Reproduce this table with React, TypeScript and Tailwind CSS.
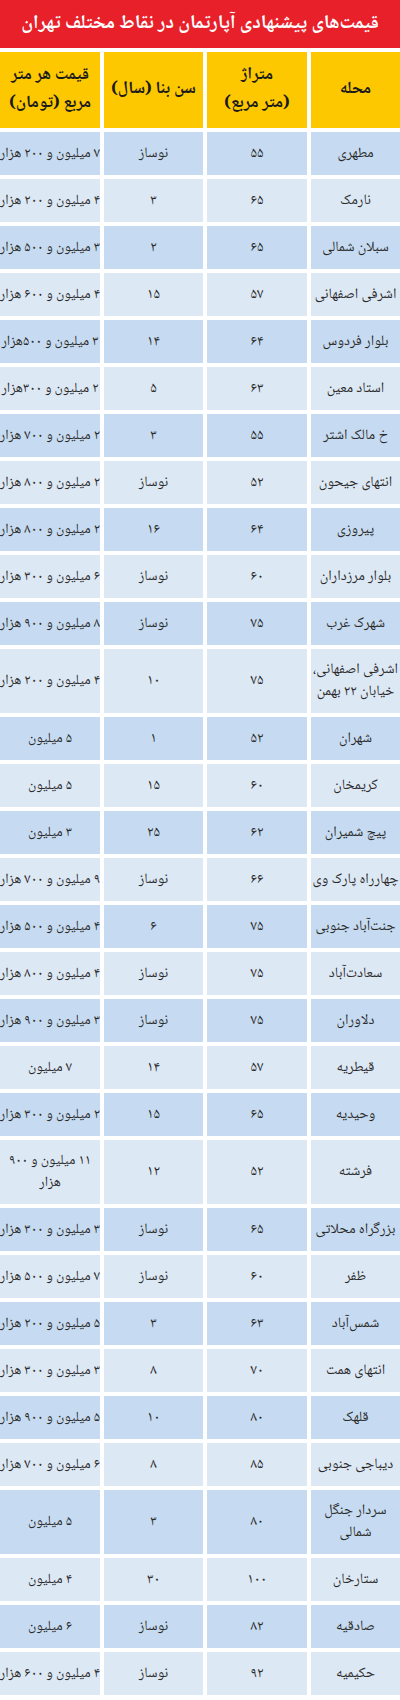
const rows: [string, string, string, string][] = [
  ["مطهری", "۵۵", "نوساز", "۷ میلیون و ۲۰۰ هزار"],
  ["نارمک", "۶۵", "۳", "۴ میلیون و ۲۰۰ هزار"],
  ["سبلان شمالی", "۶۵", "۲", "۳ میلیون و ۵۰۰ هزار"],
  ["اشرفی اصفهانی", "۵۷", "۱۵", "۴ میلیون و ۶۰۰ هزار"],
  ["بلوار فردوس", "۶۴", "۱۴", "۳ میلیون و ۵۰۰هزار"],
  ["استاد معین", "۶۳", "۵", "۲ میلیون و ۳۰۰هزار"],
  ["خ مالک اشتر", "۵۵", "۳", "۲ میلیون و ۷۰۰ هزار"],
  ["انتهای جیحون", "۵۲", "نوساز", "۲ میلیون و ۸۰۰ هزار"],
  ["پیروزی", "۶۴", "۱۶", "۲ میلیون و ۸۰۰ هزار"],
  ["بلوار مرزداران", "۶۰", "نوساز", "۶ میلیون و ۳۰۰ هزار"],
  ["شهرک غرب", "۷۵", "نوساز", "۸ میلیون و ۹۰۰ هزار"],
  ["اشرفی اصفهانی،\nخیابان ۲۲ بهمن", "۷۵", "۱۰", "۴ میلیون و ۲۰۰ هزار"],
  ["شهران", "۵۲", "۱", "۵ میلیون"],
  ["کریمخان", "۶۰", "۱۵", "۵ میلیون"],
  ["پیچ شمیران", "۶۲", "۲۵", "۳ میلیون"],
  ["چهارراه پارک وی", "۶۶", "نوساز", "۹ میلیون و ۷۰۰ هزار"],
  ["جنت‌آباد جنوبی", "۷۵", "۶", "۴ میلیون و ۵۰۰ هزار"],
  ["سعادت‌آباد", "۷۵", "نوساز", "۴ میلیون و ۸۰۰ هزار"],
  ["دلاوران", "۷۵", "نوساز", "۳ میلیون و ۹۰۰ هزار"],
  ["قیطریه", "۵۷", "۱۴", "۷ میلیون"],
  ["وحیدیه", "۶۵", "۱۵", "۲ میلیون و ۳۰۰ هزار"],
  ["فرشته", "۵۲", "۱۲", "۱۱ میلیون و ۹۰۰\nهزار"],
  ["بزرگراه محلاتی", "۶۵", "نوساز", "۳ میلیون و ۳۰۰ هزار"],
  ["ظفر", "۶۰", "نوساز", "۷ میلیون و ۵۰۰ هزار"],
  ["شمس‌آباد", "۶۳", "۳", "۵ میلیون و ۲۰۰ هزار"],
  ["انتهای همت", "۷۰", "۸", "۳ میلیون و ۳۰۰ هزار"],
  ["قلهک", "۸۰", "۱۰", "۵ میلیون و ۹۰۰ هزار"],
  ["دیباجی جنوبی", "۸۵", "۸", "۶ میلیون و ۷۰۰ هزار"],
  ["سردار جنگل\nشمالی", "۸۰", "۳", "۵ میلیون"],
  ["ستارخان", "۱۰۰", "۳۰", "۴ میلیون"],
  ["صادقیه", "۸۲", "نوساز", "۶ میلیون"],
  ["حکیمیه", "۹۲", "نوساز", "۴ میلیون و ۶۰۰ هزار"],
];

const headers = ["محله", "متراژ\n(متر مربع)", "سن بنا (سال)", "قیمت هر متر\nمربع (تومان)"];

function Cell({ text, bg, tall, small }: { text: string; bg: string; tall: boolean; small: boolean }) {
  return (
    <div
      className={`${bg} ${tall ? "h-[64px]" : "h-[43px]"} ${small ? "text-[14px]" : ""} flex flex-col justify-center text-center whitespace-pre leading-[22px]`}
    >
      {text}
    </div>
  );
}

export default function App() {
  return (
    <div
      dir="rtl"
      className="w-[400px] overflow-hidden bg-white text-[14.5px] text-[#2b2b2b] font-stretch-condensed"
      style={{ fontFamily: '"Noto Naskh Arabic", "Noto Sans Arabic", "DejaVu Sans", sans-serif' }}
    >
      <div className="flex h-[48px] items-center justify-center whitespace-nowrap bg-[#e8202a] text-[19.5px] font-bold text-white">
        قیمت‌های پیشنهادی آپارتمان در نقاط مختلف تهران
      </div>
      <div className="mt-[4px] grid grid-cols-[89px_100px_99px_100px] gap-[4px]">
        {headers.map((h) => (
          <div
            key={h}
            className="flex h-[76px] items-center justify-center whitespace-pre bg-[#fdc800] text-center text-[17px] font-bold leading-[28px] text-[#1a1a1a]"
          >
            {h}
          </div>
        ))}
        {rows.map((r, i) => {
          const bg = i % 2 === 0 ? "bg-[#c6dbf1]" : "bg-[#dde8f5]";
          const tall = r.some((t) => t.includes("\n"));
          return r.map((t, j) => (
            <Cell key={`${i}-${j}`} text={t} bg={bg} tall={tall} small={j === 3} />
          ));
        })}
      </div>
    </div>
  );
}
